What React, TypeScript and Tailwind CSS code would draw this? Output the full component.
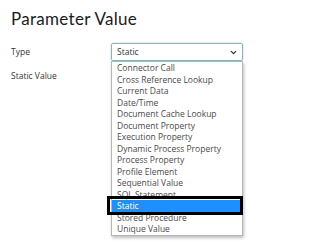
import { ChevronDown } from "lucide-react";

const options = [
  "Connector Call",
  "Cross Reference Lookup",
  "Current Data",
  "Date/Time",
  "Document Cache Lookup",
  "Document Property",
  "Execution Property",
  "Dynamic Process Property",
  "Process Property",
  "Profile Element",
  "Sequential Value",
  "SQL Statement",
  "Static",
  "Stored Procedure",
  "Unique Value",
];

export default function App() {
  const selected = "Static";

  return (
    <div className="w-[323px] h-[244px] bg-white text-[#333] font-['Open_Sans',sans-serif] overflow-hidden">
      {/* Title */}
      <h1 className="pl-[11px] pt-[8px] text-[17px] leading-[22px] font-['Lato',sans-serif] font-normal text-[#1b1b1b] tracking-[0.3px]">
        Parameter Value
      </h1>

      {/* Type row */}
      <div className="flex items-center mt-[13px]">
        <label className="w-[111px] pl-[11px] text-[8.5px]">Type</label>
        <div className="relative w-[132px] h-[18px] border border-[#8eb4ba] rounded-[2px] shadow-[0_0_2px_rgba(120,170,180,0.6)] flex items-center justify-between pl-[5px] pr-[4px] text-[8.5px]">
          <span>{selected}</span>
          <ChevronDown size={9} strokeWidth={3.5} className="text-[#333]" />

          {/* Dropdown list */}
          <ul className="absolute left-[-1px] top-[17px] w-[132px] bg-white border border-[#b5b5b5] shadow-[1px_2px_3px_rgba(0,0,0,0.25)] z-10">
            {options.map((o) => (
              <li
                key={o}
                className={
                  o === selected
                    ? "relative h-[11.5px] leading-[11.5px] pl-[5px] mr-[2px] text-[8.5px] bg-[#1e8fff] text-white"
                    : "h-[11.5px] leading-[11.5px] pl-[5px] text-[8.5px] text-[#4a4a4a]"
                }
              >
                {o}
                {o === selected && (
                  <span className="absolute left-[-5px] right-[-3px] top-[-4px] bottom-[-3px] border-[3px] border-black" />
                )}
              </li>
            ))}
          </ul>
        </div>
      </div>

      {/* Static Value row */}
      <div className="flex items-center mt-[6px]">
        <label className="w-[111px] pl-[11px] text-[8.5px]">Static Value</label>
        <div className="w-[132px] h-[18px] border border-[#c8c8c8] rounded-[2px]" />
      </div>
    </div>
  );
}
